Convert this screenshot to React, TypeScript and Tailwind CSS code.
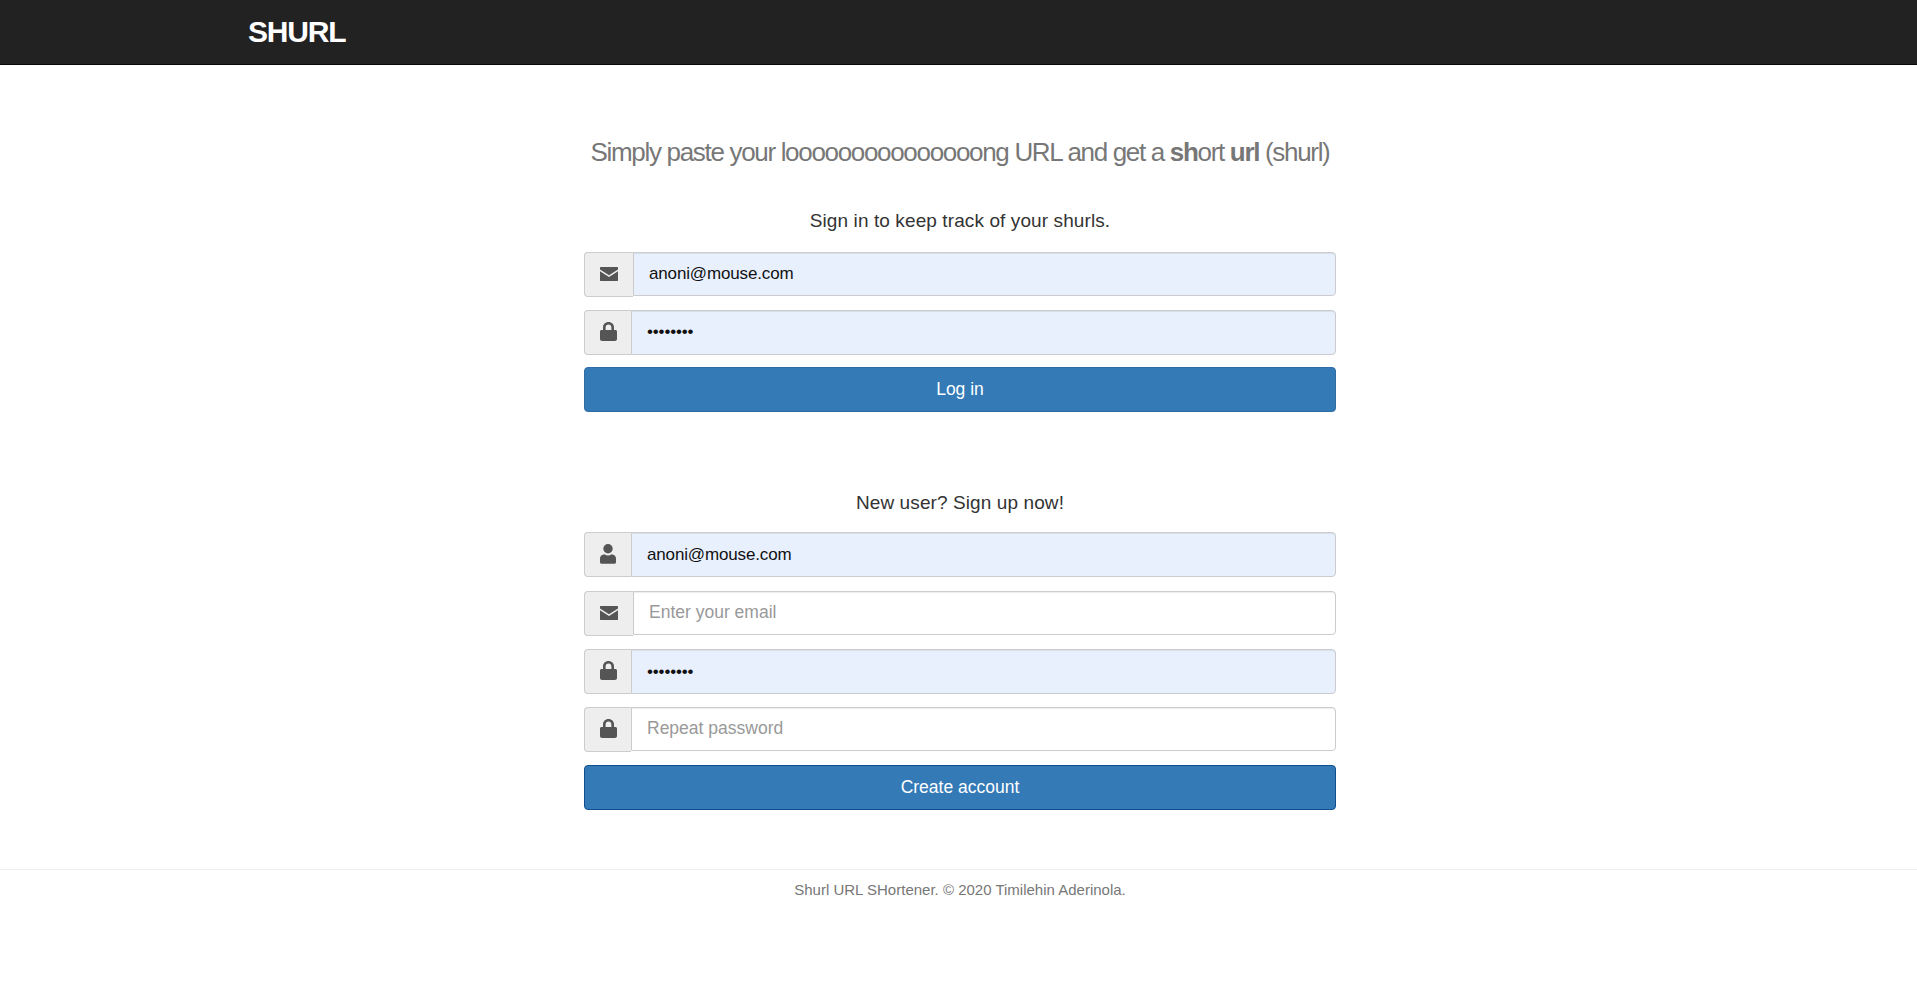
const font = "font-['Liberation_Sans',Arial,sans-serif]";

function EnvelopeIcon() {
  return (
    <svg width="18" height="14" viewBox="0 0 18 14" fill="#555555">
      <path d="M.5 0h17c.3 0 .5.2.5.5v2L9 8.300 0 2.500v-2C0 .2.200 0 .5 0z" />
      <path d="M0 4.300l9 5.800 9-5.800v9.200c0 .3-.2.5-.5.500H.5c-.3 0-.5-.2-.5-.5z" />
    </svg>
  );
}

function LockIcon() {
  return (
    <svg width="17" height="19" viewBox="0 0 17 19" fill="#555555">
      <path
        fillRule="evenodd"
        d="M3 8V5.500C3 2.400 5.200 0 8.500 0S14 2.400 14 5.500V8h1.500c.8 0 1.500.7 1.500 1.500V17c0 1.100-.9 2-2 2H2c-1.100 0-2-.9-2-2V9.500C0 8.700.7 8 1.500 8zM5.600 8h5.800V5.500c0-1.700-1.200-3-2.900-3s-2.900 1.300-2.900 3z"
      />
    </svg>
  );
}

function UserIcon() {
  return (
    <svg width="16" height="20" viewBox="0 0 16 20" fill="#555555">
      <circle cx="8" cy="4.800" r="4.700" />
      <path d="M4.500 10.300c1 .8 2.200 1.200 3.500 1.200s2.500-.4 3.500-1.200c2.500.4 4.500 1.800 4.500 4v4c0 .8-.7 1.500-1.500 1.500h-13c-.8 0-1.500-.7-1.500-1.500v-4c0-2.200 2-3.600 4.500-4z" />
    </svg>
  );
}

function Field({
  icon,
  wide,
  short,
  value,
  placeholder,
  type = "text",
  filled,
  className = "",
}: {
  icon: React.ReactNode;
  wide?: boolean;
  short?: boolean;
  value?: string;
  placeholder?: string;
  type?: string;
  filled?: boolean;
  className?: string;
}) {
  return (
    <div className={`flex h-[45px] w-full items-start ${className}`}>
      <span
        className={`flex h-[45px] shrink-0 items-center justify-center rounded-l border border-r-0 border-[#cccccc] bg-[#eeeeee] pb-[2px] ${
          wide ? "w-[49px]" : "w-[47px]"
        }`}
      >
        {icon}
      </span>
      <input
        readOnly
        type={type}
        value={value}
        placeholder={placeholder}
        className={`min-w-0 flex-1 rounded-r border border-[#cccccc] px-[15px] text-[17px] tracking-[-0.15px] text-[#111111] shadow-[inset_0_1px_1px_rgba(0,0,0,0.075)] outline-none placeholder:text-[17.5px] placeholder:tracking-normal placeholder:text-[#999999] ${
          filled ? "bg-[#e8f0fe]" : "bg-white"
        } ${short ? "h-[44px]" : "h-[45px]"}`}
      />
    </div>
  );
}

function SubmitButton({ dark, children }: { dark?: boolean; children: React.ReactNode }) {
  return (
    <button
      className={`h-[45px] w-full rounded border bg-[#337ab7] text-[17.5px] text-white ${
        dark ? "border-[#0f4f8f]" : "border-[#2e6da4]"
      }`}
    >
      {children}
    </button>
  );
}

export default function App() {
  return (
    <div className={`${font} min-h-[985px] bg-white text-[#333333]`}>
      <header className="h-[65px] border-b border-[#080808] bg-[#222222] pl-[248px]">
        <span className="block pt-[14px] text-[30px] leading-[36px] font-bold tracking-[-1.2px] text-white">
          SHURL
        </span>
      </header>

      <div className="pl-[3px]">
        <main className="mx-auto mt-[72px] flex w-[752px] flex-col items-center">
          <h4 className="text-[26px] leading-[31px] font-light tracking-[-1.32px] whitespace-nowrap text-[#777777]">
            Simply paste your looooooooooooooong URL and get a <span className="font-bold">sh</span>ort{" "}
            <span className="font-bold">url</span> (shurl)
          </h4>

          <p className="mt-[41px] text-[19px] leading-[24px] tracking-[0.1px]">
            Sign in to keep track of your shurls.
          </p>
          <div className="mt-[19px] flex w-full flex-col gap-[12.5px]">
            <Field icon={<EnvelopeIcon />} wide short value="anoni@mouse.com" filled />
            <Field icon={<LockIcon />} type="password" value="password" filled />
            <SubmitButton>Log in</SubmitButton>
          </div>

          <p className="mt-[79px] text-[19px] leading-[24px] tracking-[0.1px]">New user? Sign up now!</p>
          <div className="mt-[17px] flex w-full flex-col gap-[13px]">
            <Field icon={<UserIcon />} value="anoni@mouse.com" filled />
            <Field className="mt-px" icon={<EnvelopeIcon />} wide short placeholder="Enter your email" />
            <Field icon={<LockIcon />} type="password" value="password" filled />
            <Field icon={<LockIcon />} short type="password" placeholder="Repeat password" />
            <SubmitButton dark>Create account</SubmitButton>
          </div>
        </main>
      </div>

      <footer className="mt-[59px] border-t border-[#eeeeee] pt-[10px] pl-[3px] text-center text-[15px] leading-[20px] text-[#777777]">
        Shurl URL SHortener. © 2020 Timilehin Aderinola.
      </footer>
    </div>
  );
}
